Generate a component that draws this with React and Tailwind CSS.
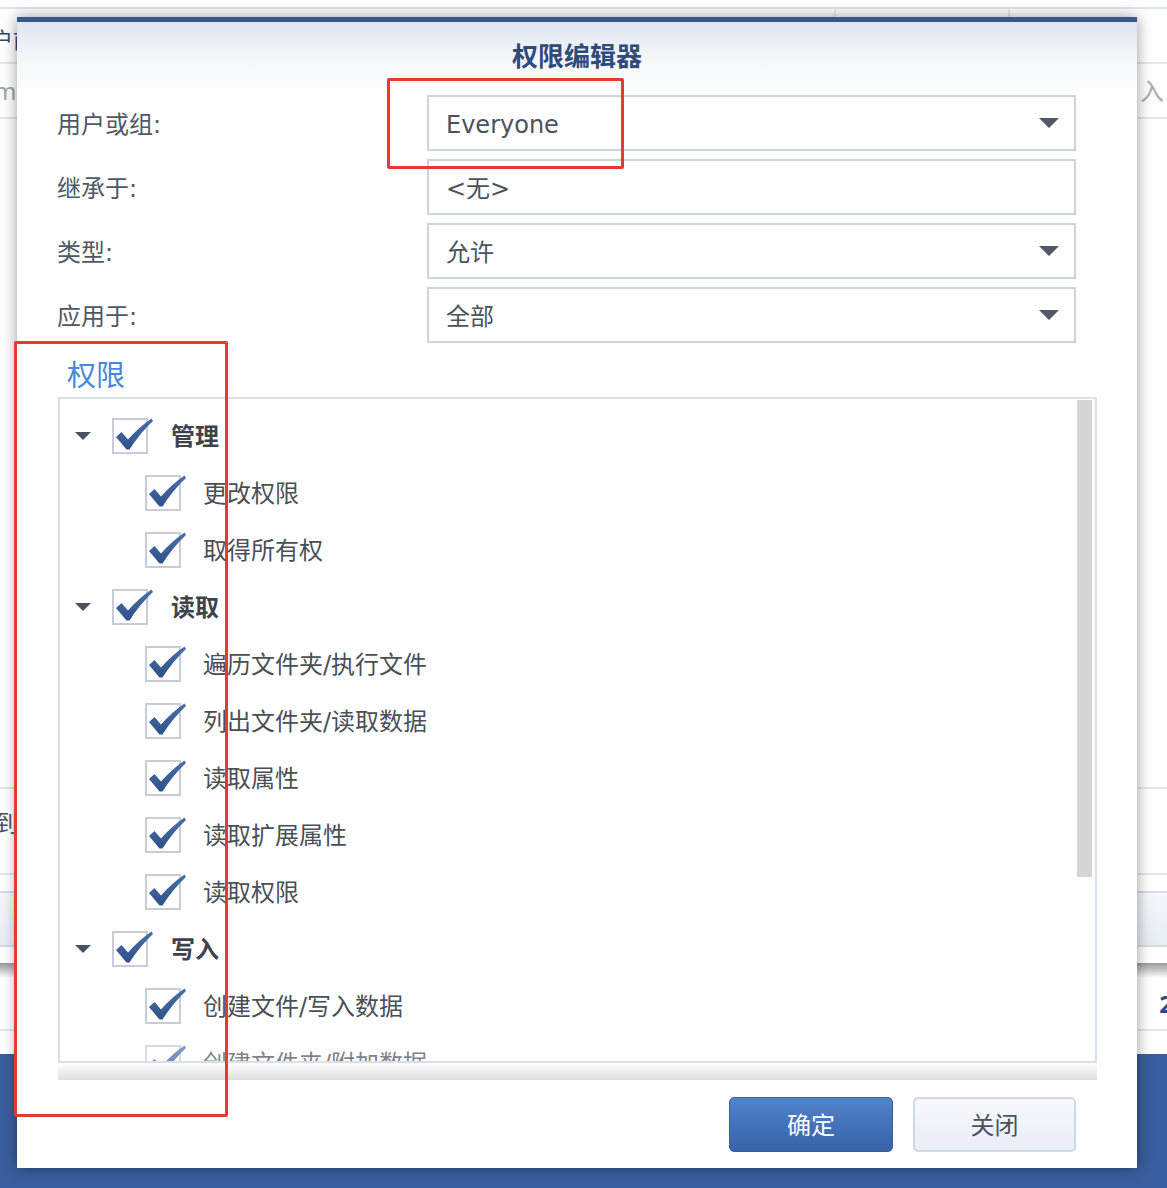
const font = "font-['DejaVu_Sans','Noto_Sans_CJK_SC',sans-serif]"
const cjk = "font-['Noto_Sans','Noto_Sans_CJK_SC',sans-serif]"

const perms = [
  { label: "管理", group: true },
  { label: "更改权限" },
  { label: "取得所有权" },
  { label: "读取", group: true },
  { label: "遍历文件夹/执行文件" },
  { label: "列出文件夹/读取数据" },
  { label: "读取属性" },
  { label: "读取扩展属性" },
  { label: "读取权限" },
  { label: "写入", group: true },
  { label: "创建文件/写入数据" },
  { label: "创建文件夹/附加数据" },
]

const fields = [
  { label: "用户或组:", value: "Everyone", select: true },
  { label: "继承于:", value: "<无>" },
  { label: "类型:", value: "允许", select: true },
  { label: "应用于:", value: "全部", select: true },
]

function Check() {
  return (
    <div className="relative w-[36px] h-[36px] border-2 border-[#c7ccd6] bg-white shrink-0">
      <svg className="absolute left-[-2px] top-[-8px]" width="44" height="44" viewBox="0 -6 44 44">
        <defs>
          <linearGradient id="ck" x1="0" y1="0" x2="0" y2="1">
            <stop offset="0" stopColor="#4a70a8" />
            <stop offset="1" stopColor="#2f5189" />
          </linearGradient>
        </defs>
        <path d="M4 19 L9.5 14 L16 21.5 Q27 9 39.5 0.5 L41 3 Q28 15 17.5 31.5 L14.5 31.5 Z" fill="url(#ck)" />
      </svg>
    </div>
  )
}

function Caret() {
  return (
    <svg width="20" height="10" viewBox="0 0 20 10">
      <path d="M0 0 H20 L10 10 Z" fill="#4f5864" />
    </svg>
  )
}

function Dialog() {
  return (
    <div className={`absolute left-[17px] top-[17px] w-[1120px] h-[1151px] bg-white shadow-[0_0_14px_rgba(0,0,0,0.4)] flex flex-col ${font}`}>
      <div className="h-[5px] bg-[#375a8c]" />
      {/* header */}
      <div className="h-[73px] bg-gradient-to-b from-[#e0e6ef] via-[#f4f6fa] to-white flex justify-center pt-[16px]">
        <span className={`text-[26px] font-bold text-[#2f4b7c] leading-[36px] ${cjk}`}>权限编辑器</span>
      </div>

      {/* form */}
      <div className="flex flex-col gap-[8px] pl-[40px] pr-[61px]">
        {fields.map(f => (
          <div key={f.label} className="flex items-center h-[56px]">
            <span className="w-[370px] pt-[3px] text-[24px] text-[#505864]">{f.label}</span>
            <div className="flex-1 h-[56px] border-2 border-[#ccd4de] flex items-center pl-[17px] pr-[15px]">
              <span className="flex-1 pt-[3px] text-[24px] text-[#4a525c]">{f.value}</span>
              {f.select && <Caret />}
            </div>
          </div>
        ))}
      </div>

      {/* permissions */}
      <div className="h-[54px] pl-[50px] pt-[10px] flex items-center">
        <span className={`text-[29px] text-[#4a87d8] ${cjk}`}>权限</span>
      </div>
      <div className="ml-[41px] w-[1039px] h-[666px] border-2 border-[#d8e0ea] flex overflow-hidden">
        <div className="flex-1 pt-[8px] overflow-hidden">
          {perms.map((p, i) => (
            <div key={p.label} className={`h-[57px] flex items-center ${i === perms.length - 1 ? "opacity-70" : ""}`}>
              {p.group ? (
                <>
                  <svg className="ml-[15px] mr-[21px]" width="16" height="8" viewBox="0 0 16 8">
                    <path d="M0 0 H16 L8 8 Z" fill="#4a5260" />
                  </svg>
                  <Check />
                  <span className={`ml-[23px] text-[24px] font-bold text-[#3e434b] ${cjk}`}>{p.label}</span>
                </>
              ) : (
                <>
                  <div className="ml-[85px]"><Check /></div>
                  <span className="ml-[22px] pt-[2px] text-[24px] text-[#4a4f57]">{p.label}</span>
                </>
              )}
            </div>
          ))}
        </div>
        <div className="w-[15px] mr-[3px] pt-[1px]">
          <div className="h-[477px] bg-[#d5d5d5]" />
        </div>
      </div>
      <div className="ml-[41px] w-[1039px] h-[17px] bg-gradient-to-b from-white to-[#dedfe1]" />

      {/* buttons */}
      <div className={`flex justify-end gap-[20px] pr-[61px] mt-[17px] ${cjk}`}>
        <button className="w-[164px] h-[55px] rounded-[5px] border border-[#34609f] bg-gradient-to-b from-[#5183ca] to-[#3763a9] text-white text-[24px]">确定</button>
        <button className="w-[163px] h-[55px] rounded-[5px] border-2 border-[#cfd8e3] bg-gradient-to-b from-[#f7f9fc] to-[#e9eef5] text-[#4a525e] text-[24px]">关闭</button>
      </div>
    </div>
  )
}

export default function App() {
  return (
    <div className={`relative w-[1167px] h-[1188px] overflow-hidden bg-white ${cjk}`}>
      {/* page behind the dialog */}
      <div className="flex flex-col h-full">
        <div className="h-[7px]" />
        <div className="h-[55px] border-t-2 border-[#dfe5ec] flex">
          <div className="w-[836px] border-r-2 border-[#e6ebf0] pt-[14px]">
            <span className="-ml-[9px] text-[22px] text-[#33466a]">户前</span>
          </div>
          <div className="w-[174px] border-r-2 border-[#e6ebf0]" />
          <div className="flex-1" />
        </div>
        <div className="h-[55px] border-t-2 border-[#e3e8ee] flex items-center justify-between">
          <span className="-ml-[6px] text-[24px] text-[#a0a4aa]">m</span>
          <span className="mr-[3px] text-[24px] text-[#a9adb2]">入</span>
        </div>
        <div className="h-[670px] border-t-2 border-[#e3e8ee]" />
        <div className="h-[86px] border-t-2 border-[#e3e8ee] pt-[16px]">
          <span className="-ml-[6px] text-[24px] text-[#4a525e]">到</span>
        </div>
        <div className="h-[90px] border-t-2 border-[#e3e8ee] pt-[16px] flex flex-col">
          <div className="h-[56px] border-y-2 border-[#d6dde6] bg-gradient-to-b from-[#f4f7fb] to-[#e8edf4]" />
        </div>
        <div className="h-[15px] bg-gradient-to-b from-[#9a9a9a] to-white" />
        <div className="h-[53px] border-b-2 border-[#e3e8ee] flex items-center justify-end">
          <span className="-mr-[6px] text-[24px] font-bold text-[#2f4b7c]">2</span>
        </div>
        <div className="h-[23px]" />
        <div className="flex-1 bg-[#3a5e9e]" />
      </div>

      <Dialog />

      {/* red annotation boxes */}
      <div className="absolute left-[387px] top-[78px] w-[237px] h-[91px] border-[3px] border-[#e8392d] rounded-[2px]" />
      <div className="absolute left-[14px] top-[341px] w-[214px] h-[776px] border-[3px] border-[#e8392d] rounded-[2px]" />
    </div>
  )
}
